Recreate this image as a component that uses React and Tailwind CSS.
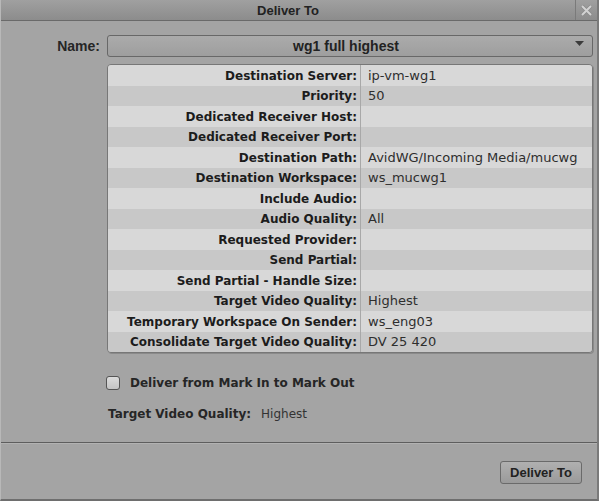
import React from "react";

const rows = [
  ["Destination Server:", "ip-vm-wg1"],
  ["Priority:", "50"],
  ["Dedicated Receiver Host:", ""],
  ["Dedicated Receiver Port:", ""],
  ["Destination Path:", "AvidWG/Incoming Media/mucwg"],
  ["Destination Workspace:", "ws_mucwg1"],
  ["Include Audio:", ""],
  ["Audio Quality:", "All"],
  ["Requested Provider:", ""],
  ["Send Partial:", ""],
  ["Send Partial - Handle Size:", ""],
  ["Target Video Quality:", "Highest"],
  ["Temporary Workspace On Sender:", "ws_eng03"],
  ["Consolidate Target Video Quality:", "DV 25 420"],
];

export default function App() {
  return (
    <div className="w-[599px] h-[501px] bg-[#a4a4a4] flex flex-col overflow-hidden border-r-2 border-r-[#7a7a7a] border-l border-l-[#b8b8b8] border-b-2 border-b-[#6e6e6e] font-['Liberation_Sans',Arial,sans-serif]">
      {/* title bar */}
      <div className="h-[21px] flex border-b border-[#6a6a6a] bg-gradient-to-b from-[#a0a0a0] to-[#8c8c8c] shrink-0">
        <div className="flex-1 flex items-center justify-center text-[13px] font-bold text-[#222] pt-[1px]">
          Deliver To
        </div>
        <div className="w-[22px] border-l border-[#7a7a7a] flex items-center justify-center">
          <svg width="13" height="13" viewBox="0 0 13 13">
            <path d="M2 2 L11 11 M11 2 L2 11" stroke="#8a8a8a" strokeWidth="3.6" />
            <path d="M2 2 L11 11 M11 2 L2 11" stroke="#d2d2d2" strokeWidth="2" />
          </svg>
        </div>
      </div>

      <div className="flex-1 flex flex-col">
        {/* Name row */}
        <div className="flex items-center mt-[14px] h-[22px]">
          <div className="w-[99px] text-right text-[14px] font-bold text-[#262626]">Name:</div>
          <div className="ml-[7px] w-[486px] h-[22px] rounded-[3px] border border-[#686868] bg-gradient-to-b from-[#ababab] to-[#9e9e9e] relative flex items-center">
            <div className="flex-1 text-center pr-[8px] text-[14px] font-bold text-[#222]">wg1 full highest</div>
            <svg className="absolute right-[8px] top-[5px]" width="9" height="6" viewBox="0 0 9 6">
              <path d="M0 0 H9 L4.5 5 Z" fill="#3c3c3c" />
            </svg>
          </div>
        </div>

        {/* table */}
        <div className="ml-[106px] mt-[7px] w-[486px] rounded-[4px] border border-[#777] shadow-[1px_1px_0_#8a8a8a] overflow-hidden font-['DejaVu_Sans',Verdana,sans-serif]">
          {rows.map(([k, v], i) => (
            <div
              key={k}
              className={`flex ${i % 2 === 0 ? "bg-[#d8d8d8] h-[21px]" : "bg-[#c8c8c8] h-[20px]"}`}
            >
              <div className="w-[253px] text-right pr-[3px] text-[12px] font-bold text-[#1c1c1c] flex items-center justify-end border-r border-[#a8a8a8] whitespace-nowrap">
                {k}
              </div>
              <div className="flex-1 pl-[7px] text-[13px] text-[#2e2e2e] flex items-center whitespace-nowrap">{v}</div>
            </div>
          ))}
        </div>

        {/* checkbox */}
        <div className="flex items-center ml-[105px] mt-[21px] font-['DejaVu_Sans',Verdana,sans-serif]">
          <div className="w-[14px] h-[14px] rounded-[3px] border border-[#555] bg-gradient-to-b from-[#dcdcdc] to-[#c4c4c4]" />
          <span className="ml-[10px] text-[12px] font-bold text-[#262626]">Deliver from Mark In to Mark Out</span>
        </div>

        <div className="flex items-center ml-[107px] mt-[13px] font-['DejaVu_Sans',Verdana,sans-serif] text-[12px]">
          <span className="font-bold text-[#262626]">Target Video Quality:</span>
          <span className="ml-[10px] text-[#333]">Highest</span>
        </div>

        <div className="mt-[19px] border-t border-[#5e5e5e] border-b border-b-[#b2b2b2]" />

        <div className="flex justify-end pr-[15px] mt-[17px]">
          <div className="w-[82px] h-[23px] rounded-[3px] border border-[#6a6a6a] bg-gradient-to-b from-[#b0b0b0] to-[#9a9a9a] flex items-center justify-center text-[13px] font-bold text-[#222]">
            Deliver To
          </div>
        </div>
      </div>
    </div>
  );
}
